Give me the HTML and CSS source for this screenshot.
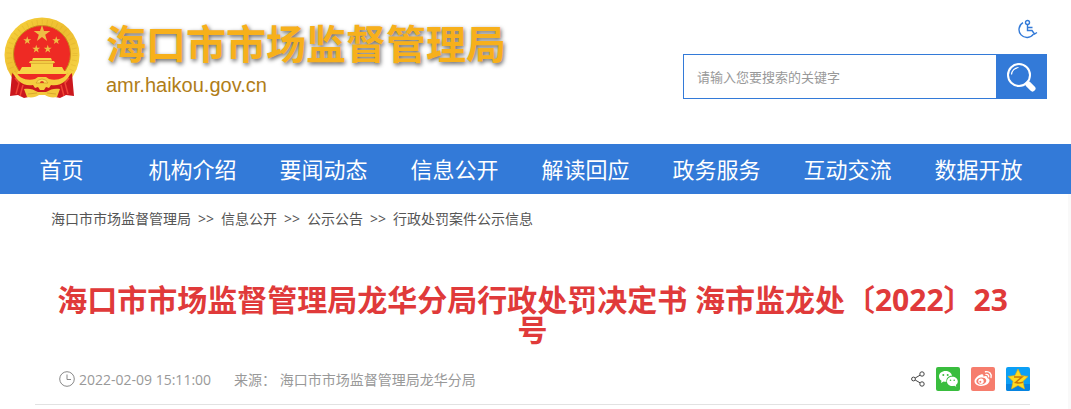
FILE: index.html
```html
<!DOCTYPE html>
<html lang="zh-CN">

<head>
    <meta charset="UTF-8">
    <meta name="viewport" content="width=device-width, initial-scale=1.0">
    <title>海口市市场监督管理局</title>
    <link rel="stylesheet" href="styles.css">
</head>

<body>
    <header class="header">
        <a class="logo" href="#">
            <svg class="emblem" viewBox="0 0 76 82" aria-hidden="true">
                <defs>
                    <linearGradient id="gold" x1="0" y1="0" x2="1" y2="1">
                        <stop offset="0" stop-color="#f6d23c" />
                        <stop offset=".5" stop-color="#edbd30" />
                        <stop offset="1" stop-color="#f9dc4c" />
                    </linearGradient>
                </defs>
                <ellipse cx="38" cy="38" rx="37.500" ry="37.500" fill="url(#gold)" />
                <circle cx="38" cy="38" r="33" fill="none" stroke="#c9911b" stroke-width="5" stroke-dasharray="1 4" opacity=".2" />
                <circle cx="38" cy="37" r="28.500" fill="#ee2a24" stroke="#c8901c" stroke-width="1" />
                <g fill="#eebd45">
                    <path id="star" d="M38 8l2 6h6.300l-5.100 3.800 1.900 6.100-5.100-3.800-5.100 3.800 1.900-6.100-5.100-3.800H36z" />
                    <use href="#star" transform="translate(5 15.500) scale(.48)" />
                    <use href="#star" transform="translate(34 15.500) scale(.48)" />
                    <use href="#star" transform="translate(14 24) scale(.48)" />
                    <use href="#star" transform="translate(25.500 24) scale(.48)" />
                </g>
                <!-- gate tower -->
                <path d="M29 41h18l1 2.500h-20zM26 44h24l1 2H25zM27 46h22v4H27zM18 50h40l4 7H14z" fill="#f7d548" />
                <path d="M28 43.700h20M26 46.300h24" stroke="#cf9a28" stroke-width=".7" />
                <!-- ribbons -->
                <path d="M13 56h50l-5 8H18z" fill="#ee2a24" />
                <path d="M14 54h48l1 3H13z" fill="#f7d548" />
                <path d="M8 56c5 5 12 7 20 7h20c8 0 15-2 20-7l1 12 1 11-8-1-6 3-18-4-18 4-6-3-8 1 1-11z" fill="#cb171d" />
                <path d="M11 61l4 5-3 11M65 61l-4 5 3 11M19 68l-3 11M57 68l3 11" fill="none" stroke="#f04435" stroke-width="1.500" />
                <path d="M9 53c6 9 15 11 22 9l3-2h8l3 2c7 2 16 0 22-9-1 10-11 17-20 15l-2 3-3-1-2 3h-4l-2-3-3 1-2-3c-9 2-19-5-20-15z" fill="#f5cc3e" />
                <path d="M32 66a6.500 6.500 0 0 1 12 0z" fill="#f9dd5a" stroke="#d3a02a" stroke-width=".8" />
                <path d="M36 66a2 2 0 0 1 4 0z" fill="#dc3a20" />
                <path d="M20 72c5-1 9 0 14 3h8c5-3 9-4 14-3l-3 8c-5 1-9 0-12-2h-6c-3 2-7 3-12 2z" fill="#f3c83d" />
                <path d="M24 77l9-1M52 77l-9-1" stroke="#cf9a28" stroke-width=".7" />
            </svg>
            <span class="logo-text">
                <span class="site-name">海口市市场监督管理局</span>
                <span class="domain">amr.haikou.gov.cn</span>
            </span>
        </a>
        <div class="tools">
            <a class="access" href="#" aria-label="无障碍">
                <svg width="20" height="20" viewBox="0 0 20 20" fill="none" stroke="#337ad8" stroke-width="1.400">
                    <circle cx="9.500" cy="3.500" r="2" />
                    <path d="M9.500 5.500v6H14l2.500 3.500 2.500-1.500M9.500 8.500h5M5 3.600A8 8 0 1 0 15.500 15.200" />
                </svg>
            </a>
            <form class="search">
                <input class="search-input" type="text" placeholder="请输入您要搜索的关键字" aria-label="搜索">
                <button class="search-btn" type="button" aria-label="搜索">
                    <svg width="30" height="30" viewBox="0 0 30 30" fill="none" stroke="#fff">
                        <circle cx="13" cy="13" r="11" stroke-width="2" />
                        <path d="M5.500 12.500A7.500 7.500 0 0 1 12.500 5.500" stroke-width="1.200" />
                        <path d="M20 20l3 3" stroke-width="3" />
                        <path d="M22.500 22.500l4 4" stroke-width="6" stroke-linecap="round" />
                    </svg>
                </button>
            </form>
        </div>
    </header>

    <nav class="nav">
        <ul class="nav-list">
            <li><a href="#">首页</a></li>
            <li><a href="#">机构介绍</a></li>
            <li><a href="#">要闻动态</a></li>
            <li><a href="#">信息公开</a></li>
            <li><a href="#">解读回应</a></li>
            <li><a href="#">政务服务</a></li>
            <li><a href="#">互动交流</a></li>
            <li><a href="#">数据开放</a></li>
        </ul>
    </nav>

    <main class="content">
        <div class="crumbs">
            <a href="#">海口市市场监督管理局</a>
            <span>&gt;&gt;</span>
            <a href="#">信息公开</a>
            <span>&gt;&gt;</span>
            <a href="#">公示公告</a>
            <span>&gt;&gt;</span>
            <a href="#">行政处罚案件公示信息</a>
        </div>

        <h1 class="title">海口市市场监督管理局龙华分局行政处罚决定书 海市监龙处〔2022〕23号</h1>

        <div class="meta">
            <div class="info">
                <span class="time">
                    <svg width="16" height="16" viewBox="0 0 16 16" fill="none" stroke="#888">
                        <circle cx="8" cy="8" r="7.300" />
                        <path d="M8 3.500v5h4" />
                    </svg>
                    2022-02-09 15:11:00
                </span>
                <span>来源： 海口市市场监督管理局龙华分局</span>
            </div>
            <div class="share">
                <svg width="14" height="16" viewBox="0 0 14 16" fill="none" stroke="#444">
                    <circle cx="2.500" cy="8" r="1.900" />
                    <circle cx="11" cy="3" r="2.200" />
                    <circle cx="11" cy="13" r="2.200" />
                    <path d="M4.200 7L9 4.200M4.200 9L9 11.800" />
                </svg>
                <a href="#" aria-label="微信">
                    <svg width="24" height="24" viewBox="0 0 24 24">
                        <rect width="24" height="24" rx="2" fill="#39bd3e" />
                        <path d="M9.500 4C5.900 4 3 6.400 3 9.400c0 1.800 1 3.300 2.500 4.300L5 16l2.600-1.400c1 .3 2 .3 2.900.2C9.800 11 13 8.500 16 8.800 15.500 6 12.800 4 9.500 4z" fill="#fff" />
                        <path d="M16.300 9.800c-3 0-5.300 2-5.300 4.600 0 2.500 2.400 4.600 5.300 4.600.7 0 1.300-.1 1.900-.3l2.100 1.100-.5-1.800c1.300-.9 2-2.100 2-3.600 0-2.600-2.500-4.600-5.500-4.600z" fill="#fff" />
                        <g fill="#39bd3e">
                            <circle cx="7.300" cy="8" r="1" />
                            <circle cx="11.700" cy="8" r="1" />
                            <circle cx="14.500" cy="13.300" r=".8" />
                            <circle cx="18.200" cy="13.300" r=".8" />
                        </g>
                    </svg>
                </a>
                <a href="#" aria-label="微博">
                    <svg width="24" height="24" viewBox="0 0 24 24">
                        <rect width="24" height="24" rx="2" fill="#f67d6d" />
                        <path d="M10.500 7.300c1.300-.4 2.200.2 1.800 2.100 2.400-1 4.500-.6 4 1.600 1.500.5 2.400 1.500 2.200 2.800-.3 3-4 5.200-8 5.200-3.800 0-7-1.900-7-4.800 0-2.700 4-6.200 7-6.900z" fill="#fff" />
                        <ellipse cx="10.300" cy="14" rx="5" ry="3.500" fill="#f67d6d" transform="rotate(-8 10.300 14)" />
                        <circle cx="10" cy="14.200" r="2.700" fill="#fff" />
                        <circle cx="9.300" cy="14.800" r="1" fill="#f67d6d" />
                        <path d="M14.500 4.800c3.800-.8 6.500 2 5.500 5.700M15 7.400c1.800-.3 2.900.8 2.600 2.400" fill="none" stroke="#fff" stroke-width="1.400" stroke-linecap="round" />
                    </svg>
                </a>
                <a href="#" aria-label="QQ空间">
                    <svg width="24" height="24" viewBox="0 0 24 24">
                        <rect width="24" height="24" rx="2" fill="#0c9ff5" />
                        <path d="M0 17h24v5a2 2 0 0 1-2 2H2a2 2 0 0 1-2-2z" fill="#0784e0" />
                        <path d="M12 2l3.100 6.500 7 .9-5.100 4.900 1.500 7.700-6.500-3.600L5.500 22 7 14.300 1.900 9.400l7-.9z" fill="#ffdc20" stroke="#e9a90b" stroke-width=".6" />
                        <path d="M8 10h8l-6.500 5.500c2.500.6 5 .5 7.500-.2" fill="none" stroke="#c97808" stroke-width="1.500" />
                    </svg>
                </a>
            </div>
        </div>
    </main>
</body>

</html>
```
FILE: styles.css
```css
* {
    box-sizing: border-box;
}

body {
    margin: 0;
    background-color: #f9f9f9;
    font-family: "Open Sans", "Noto Sans CJK SC", sans-serif;
    font-size: 14px;
    color: #555;
}

a {
    color: inherit;
    text-decoration: none;
}

svg {
    display: block;
}

/* ------------------Header------------------- */
.header {
    display: flex;
    justify-content: space-between;
    height: 144px;
    padding: 17px 24px 0 4px;
    background-color: #fff;
}

.logo {
    display: flex;
    align-items: flex-start;
    gap: 26px;
}

.emblem {
    width: 76px;
    height: 82px;
}

.logo-text {
    display: flex;
    flex-direction: column;
}

.site-name {
    font-size: 40px;
    font-weight: 700;
    line-height: 54px;
    color: #f7b01b;
    text-shadow: 1px 2px 4px rgba(0, 0, 0, 0.6);
}

.domain {
    font-family: "Liberation Sans", sans-serif;
    font-size: 20px;
    line-height: 28px;
    color: #b07d18;
}

.tools {
    display: flex;
    flex-direction: column;
    align-items: flex-end;
    gap: 15px;
    padding-top: 2px;
}

.access {
    margin-right: 9px;
}

.search {
    display: flex;
    width: 364px;
    height: 45px;
    border: 1px solid #337ad8;
}

.search-input {
    flex: 1;
    min-width: 0;
    padding: 0 13px;
    border: 0;
    font-family: inherit;
    font-size: 13px;
}

.search-input::placeholder {
    color: #999;
}

.search-btn {
    display: flex;
    justify-content: center;
    align-items: center;
    width: 50px;
    padding: 0;
    border: 0;
    background-color: #337ad8;
}

/* ------------------Nav------------------- */
.nav {
    background-color: #337ad8;
}

.nav-list {
    display: flex;
    margin: 0 27px 0 -4px;
    padding: 0;
    list-style: none;
}

.nav-list li {
    flex: 1;
    text-align: center;
    font-size: 22px;
    line-height: 50px;
    color: #fff;
}

/* ------------------Content------------------- */
.content {
    margin-right: 3px;
    padding: 0 38px 20px 35px;
    background-color: #fff;
}

.crumbs {
    display: flex;
    gap: 7px;
    padding: 15px 16px 0;
    line-height: 20px;
}

.title {
    margin: 0;
    padding: 56px 16px 0;
    font-size: 30px;
    font-weight: 700;
    line-height: 30px;
    text-align: center;
    color: #e03a3a;
}

.meta {
    display: flex;
    justify-content: space-between;
    align-items: center;
    padding: 22px 0 13px;
    border-bottom: 1px solid #e2e2e2;
    color: #999;
}

.info {
    display: flex;
    gap: 23px;
    padding-left: 24px;
}

.time {
    display: flex;
    align-items: center;
    gap: 4px;
}

.share {
    display: flex;
    align-items: center;
    gap: 11px;
}
```
